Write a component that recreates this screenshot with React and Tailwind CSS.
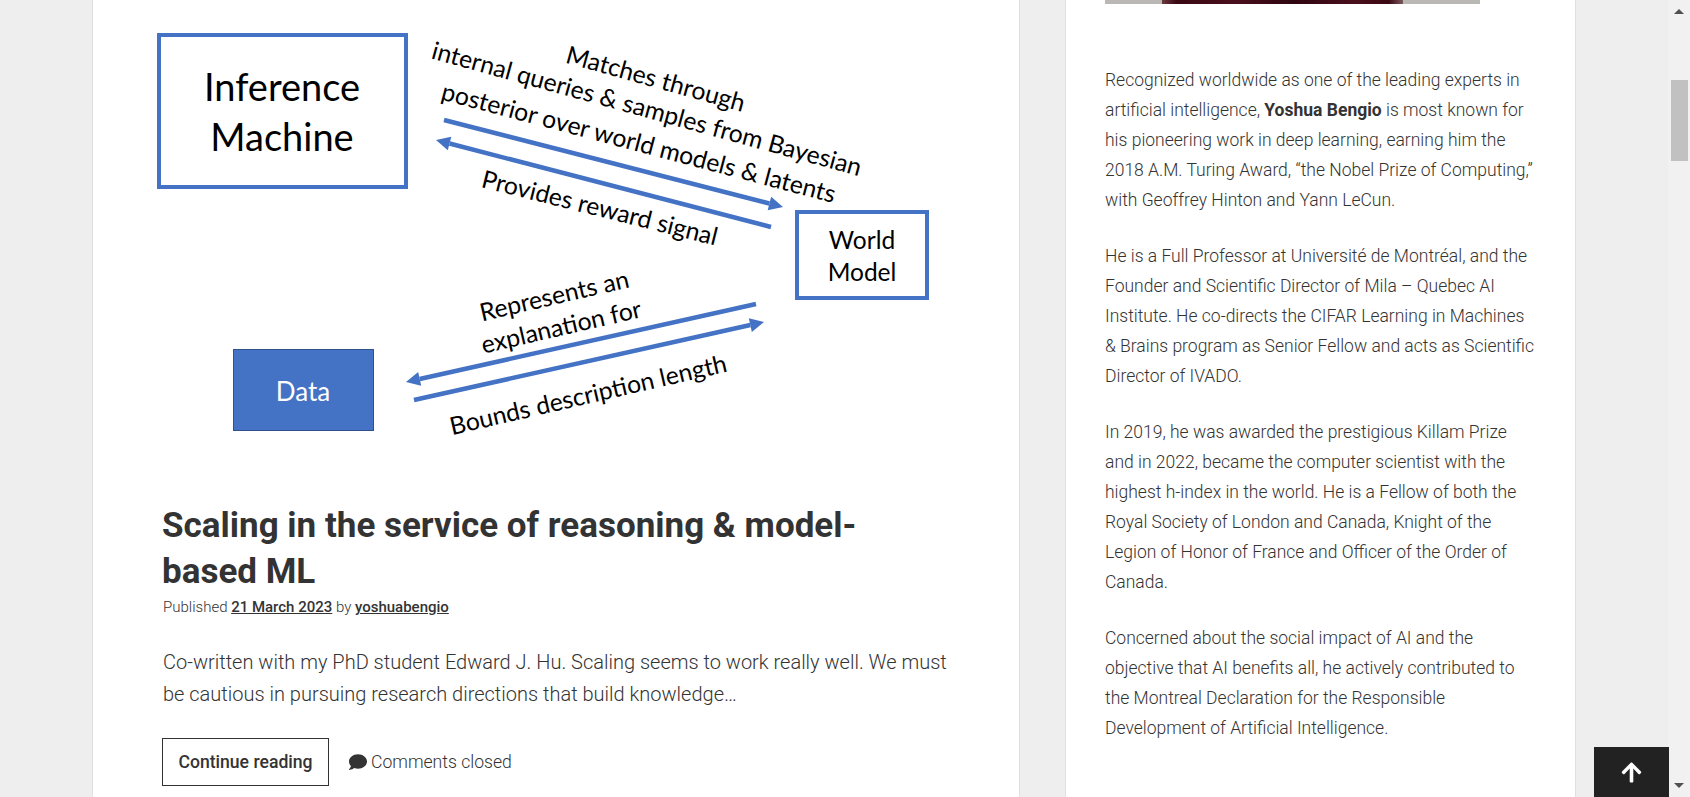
import React from 'react';
import { FaArrowUp, FaComment } from 'react-icons/fa';

const blue = '#4472c4';

const Arrow = ({ x1, y1, x2, y2 }) => {
  const a = Math.atan2(y2 - y1, x2 - x1);
  const l = 14;
  const w = 7;
  const bx = x2 - l * Math.cos(a);
  const by = y2 - l * Math.sin(a);
  const px = -Math.sin(a) * w;
  const py = Math.cos(a) * w;
  return (
    <g>
      <line x1={x1} y1={y1} x2={bx} y2={by} stroke={blue} strokeWidth="4.5" />
      <polygon points={`${x2},${y2} ${bx + px},${by + py} ${bx - px},${by - py}`} fill={blue} />
    </g>
  );
};

const Label = ({ x, y, angle = 0, size = 24.7, fill = '#000', children }) => (
  <text
    x={x}
    y={y}
    fontSize={size}
    fill={fill}
    textAnchor="middle"
    dominantBaseline="central"
    transform={angle ? `rotate(${angle} ${x} ${y})` : undefined}
  >
    {children}
  </text>
);

const Diagram = () => (
  <svg className="block w-[926px] h-[470px] font-['Lato',sans-serif]" viewBox="93 0 926 470">
    <rect x="159" y="35" width="247" height="152" fill="#fff" stroke={blue} strokeWidth="4" />
    <Label x={282} y={86} size={38}>Inference</Label>
    <Label x={282} y={136} size={38}>Machine</Label>

    <rect x="797" y="212" width="130" height="86" fill="#fff" stroke={blue} strokeWidth="4" />
    <Label x={862} y={239} size={24.5}>World</Label>
    <Label x={862} y={271} size={24.5}>Model</Label>

    <rect x="233.5" y="349.5" width="140" height="81" fill={blue} stroke="#2f528f" />
    <Label x={303} y={391} size={26} fill="#fff">Data</Label>

    <Label x={656} y={78} angle={15.5}>Matches through</Label>
    <Label x={647} y={108} angle={15.4}>internal queries &amp; samples from Bayesian</Label>
    <Label x={639} y={142} angle={14.8}>posterior over world models &amp; latents</Label>
    <Label x={600} y={207} angle={14}>Provides reward signal</Label>
    <Label x={554} y={295} angle={-13}>Represents an</Label>
    <Label x={561} y={326} angle={-13}>explanation for</Label>
    <Label x={588} y={394} angle={-13}>Bounds description length</Label>

    <Arrow x1={444} y1={120} x2={783} y2={207} />
    <Arrow x1={771} y1={227} x2={436} y2={140} />
    <Arrow x1={756} y1={304} x2={406} y2={382} />
    <Arrow x1={414} y1={400} x2={764} y2={322} />
  </svg>
);

const paragraphs = [
  [
    'Recognized worldwide as one of the leading experts in artificial intelligence, ',
    <strong key="b" className="font-bold">Yoshua Bengio</strong>,
    ' is most known for his pioneering work in deep learning, earning him the 2018 A.M. Turing Award, “the Nobel Prize of Computing,” with Geoffrey Hinton and Yann LeCun.',
  ],
  ['He is a Full Professor at Université de Montréal, and the Founder and Scientific Director of Mila – Quebec AI Institute. He co-directs the CIFAR Learning in Machines & Brains program as Senior Fellow and acts as Scientific Director of IVADO.'],
  ['In 2019, he was awarded the prestigious Killam Prize and in 2022, became the computer scientist with the highest h-index in the world. He is a Fellow of both the Royal Society of London and Canada, Knight of the Legion of Honor of France and Officer of the Order of Canada.'],
  ['Concerned about the social impact of AI and the objective that AI benefits all, he actively contributed to the Montreal Declaration for the Responsible Development of Artificial Intelligence.'],
];

export default function App() {
  return (
    <div className="relative flex h-screen overflow-hidden bg-[#eeeeee] font-['Roboto',sans-serif] text-[#333333]">
      <div className="flex flex-1 items-start pl-[92px]">
        <main className="w-[928px] shrink-0 h-[900px] border-x border-[#e0e0e0] bg-white">
          <Diagram />
          <div className="pl-[69px] pr-[70px] pt-[33px]">
            <h2 className="text-[35px] leading-[45.5px] font-bold">Scaling in the service of reasoning &amp; model-based ML</h2>
            <p className="mt-[2px] pl-[1px] text-[15px] leading-[22px] font-light">
              Published <a className="font-medium underline">21 March 2023</a> by <a className="font-medium underline">yoshuabengio</a>
            </p>
            <p className="mt-[28px] pl-[1px] text-[20px] leading-[32px] font-light">
              Co-written with my PhD student Edward J. Hu. Scaling seems to work really well. We must be cautious in pursuing research directions that build knowledge…
            </p>
            <div className="mt-[28px] flex items-center gap-[20px]">
              <a className="flex h-[48px] w-[167px] items-center justify-center border border-[#333333] text-[17.6px] font-medium">Continue reading</a>
              <span className="flex items-center gap-[4px] text-[17.6px] font-light">
                <FaComment className="h-[18px] w-[18px]" />
                Comments closed
              </span>
            </div>
          </div>
        </main>
        <aside className="ml-[45px] w-[511px] shrink-0 h-[900px] border-x border-[#e0e0e0] bg-white pl-[39px] pr-[37px]">
          <div className="flex h-[4px] w-[375px] bg-[#b9b8b5]">
            <div className="ml-[57px] h-full w-[241px] bg-[linear-gradient(90deg,#6b3a3f,#3a0812_6%,#4a0f1c_30%,#2e0610_55%,#4a0f1c_80%,#3a0812_94%,#7a5a5c)]" />
          </div>
          <div className="mt-[61px] flex flex-col gap-[26px] text-[17.5px] leading-[30px] font-light">
            {paragraphs.map((p, i) => (
              <p key={i}>{p}</p>
            ))}
          </div>
        </aside>
      </div>

      <div className="flex w-[22px] shrink-0 flex-col items-center bg-[#f1f1f1]">
        <div className="mt-[9px] h-0 w-0 border-x-[5px] border-b-[5px] border-x-transparent border-b-[#505050]" />
        <div className="mt-[66px] h-[81px] w-[17px] bg-[#c1c1c1]" />
        <div className="mt-auto mb-[9px] h-0 w-0 border-x-[5px] border-t-[5px] border-x-transparent border-t-[#505050]" />
      </div>

      <button className="absolute right-[21px] bottom-0 flex h-[50px] w-[75px] items-center justify-center bg-[#222222] text-white">
        <FaArrowUp className="h-[23px] w-[23px]" />
      </button>
    </div>
  );
}
